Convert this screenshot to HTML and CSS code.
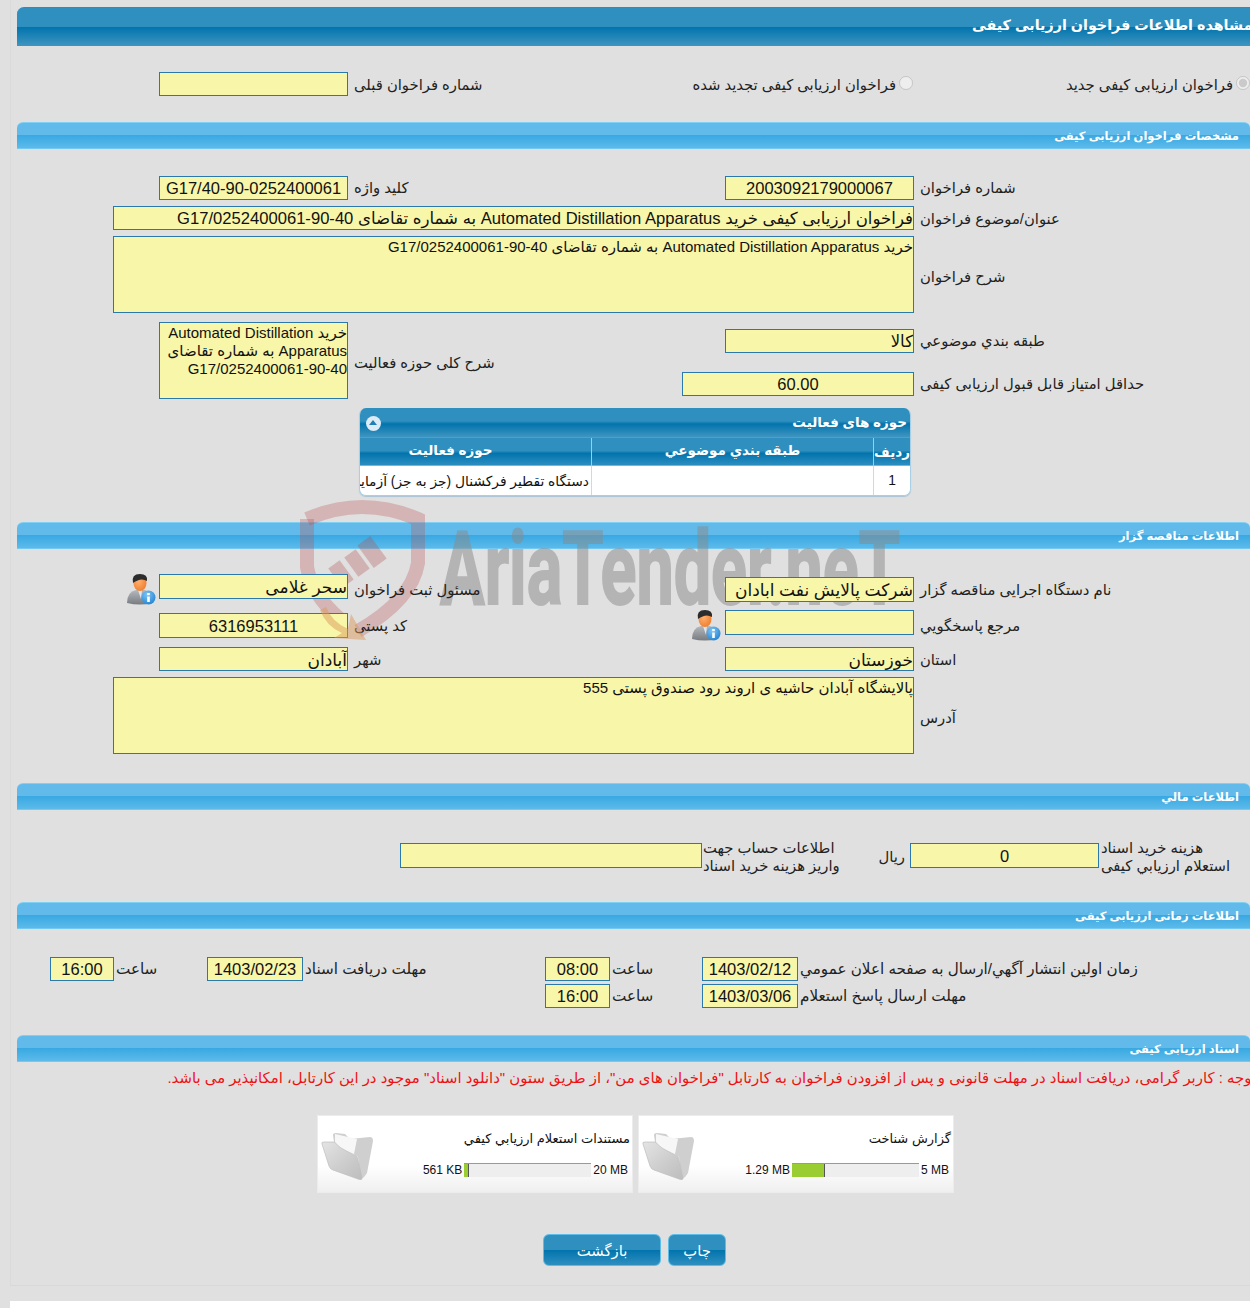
FILE: index.html
```html
<!DOCTYPE html>
<html lang="fa">
<head>
<meta charset="utf-8">
<title>مشاهده اطلاعات فراخوان ارزیابی کیفی</title>
<link rel="stylesheet" href="styles.css">
</head>
<body>
<div class="page">
  <svg class="watermark" viewBox="0 0 620 160" width="620" height="160" aria-hidden="true">
    <path class="wm-shield" d="M7 24 Q35 12 62 12 Q90 12 118 24 L118 68 Q112 105 58 136"/>
    <path class="wm-shield" d="M7 24 L7 72 Q12 100 40 124"/>
    <g class="wm-gavel">
      <rect x="-8" y="-14" width="16" height="28" transform="translate(72 57) rotate(-36)"/>
      <rect x="-7" y="-12" width="14" height="24" transform="translate(57 68) rotate(-36)"/>
      <rect x="-7" y="-12" width="14" height="24" transform="translate(41 79) rotate(-36)"/>
    </g>
    <text class="wm-text" x="140" y="109" textLength="460" lengthAdjust="spacingAndGlyphs">AriaTender.neT</text>
  </svg>
  <svg class="wm-arrow" viewBox="0 0 60 60" width="60" height="60" aria-hidden="true">
    <path d="M8 5 Q14 20 30 27 L33 12 L48 38 L16 36 L24 31 Q8 24 2 8Z"/>
  </svg>

  <h1 class="title-bar"><span>مشاهده اطلاعات فراخوان ارزیابی کیفی</span></h1>

  <div class="radio-row">
    <div></div>
    <input class="field" type="text" readonly>
    <label class="lbl">شماره فراخوان قبلی</label>
    <label class="radio"><input type="radio" name="kind" disabled><span>فراخوان ارزیابی کیفی تجدید شده</span></label>
    <label class="radio"><input type="radio" name="kind" checked disabled><span>فراخوان ارزیابی کیفی جدید</span></label>
  </div>

  <h2 class="sec-bar sec-a">مشخصات فراخوان ارزیابی کیفی</h2>

  <div class="row row-first">
    <div></div>
    <input class="field num" type="text" readonly value="G17/40-90-0252400061">
    <label class="lbl">کلید واژه</label>
    <input class="field num" type="text" readonly value="2003092179000067">
    <label class="lbl">شماره فراخوان</label>
  </div>
  <div class="wide wide-subject">
    <input class="field field-wide" type="text" readonly value="فراخوان ارزیابی کیفی خرید Automated Distillation Apparatus به شماره تقاضای G17/0252400061-90-40">
    <label class="lbl">عنوان/موضوع فراخوان</label>
  </div>
  <div class="wide wide-desc">
    <textarea class="field area-wide" readonly>خرید Automated Distillation Apparatus به شماره تقاضای G17/0252400061-90-40</textarea>
    <label class="lbl">شرح فراخوان</label>
  </div>

  <div class="activity">
    <div></div>
    <textarea class="field area-small" readonly>خرید Automated Distillation Apparatus به شماره تقاضای G17/0252400061-90-40</textarea>
    <label class="lbl lbl-mid">شرح کلی حوزه فعالیت</label>
    <div class="activity-right">
      <div class="pair pair-cat">
        <input class="field field-cat" type="text" readonly value="کالا">
        <label class="lbl">طبقه بندي موضوعي</label>
      </div>
      <div class="pair pair-score">
        <input class="field field-score num" type="text" readonly value="60.00">
        <label class="lbl">حداقل امتیاز قابل قبول ارزیابی کیفی</label>
      </div>
    </div>
  </div>

  <div class="subtable">
    <div class="sub-title"><span>حوزه های فعالیت</span><span class="collapse"></span></div>
    <div class="sub-head">
      <div class="c-a">حوزه فعالیت</div>
      <div class="c-b">طبقه بندي موضوعي</div>
      <div class="c-c">ردیف</div>
    </div>
    <div class="sub-body">
      <div class="c-a clip">دستگاه تقطیر فرکشنال (جز به جز) آزمایشگاهی</div>
      <div class="c-b"></div>
      <div class="c-c">1</div>
    </div>
  </div>

  <h2 class="sec-bar sec-b">اطلاعات مناقصه گزار</h2>

  <div class="row row-org">
    <div class="icon-cell">
      <svg class="user-icon" viewBox="0 0 30 32" width="30" height="32" aria-hidden="true"><use href="#user"/></svg>
    </div>
    <input class="field field-big" type="text" readonly value="سحر غلامی">
    <label class="lbl">مسئول ثبت فراخوان</label>
    <input class="field field-big shift3" type="text" readonly value="شرکت پالایش نفت ابادان">
    <label class="lbl">نام دستگاه اجرایی مناقصه گزار</label>
  </div>
  <div class="row row-post">
    <div></div>
    <input class="field num shift3" type="text" readonly value="6316953111">
    <label class="lbl">کد پستی</label>
    <div class="ref-cell">
      <svg class="user-icon" viewBox="0 0 30 32" width="30" height="32" aria-hidden="true"><use href="#user"/></svg>
      <input class="field ref-field" type="text" readonly>
    </div>
    <label class="lbl">مرجع پاسخگویي</label>
  </div>
  <div class="row row-city">
    <div></div>
    <input class="field field-big" type="text" readonly value="آبادان">
    <label class="lbl">شهر</label>
    <input class="field field-big" type="text" readonly value="خوزستان">
    <label class="lbl">استان</label>
  </div>
  <div class="wide wide-addr">
    <textarea class="field area-wide" readonly>پالایشگاه آبادان حاشیه ی اروند رود صندوق پستی 555</textarea>
    <label class="lbl">آدرس</label>
  </div>

  <h2 class="sec-bar sec-c">اطلاعات مالي</h2>

  <div class="finance">
    <input class="field field-acc" type="text" readonly>
    <label class="lbl-2line lbl-acc">اطلاعات حساب جهت<br>واریز هزینه خرید اسناد</label>
    <span class="rial">ریال</span>
    <input class="field num" type="text" readonly value="0">
    <label class="lbl-2line lbl-fee">هزینه خرید اسناد<br>استعلام ارزیابي کیفی</label>
  </div>

  <h2 class="sec-bar sec-d">اطلاعات زمانی ارزیابی کیفی</h2>

  <div class="times times-first">
    <div></div>
    <input class="field num" type="text" readonly value="16:00">
    <label class="lbl-t">ساعت</label>
    <input class="field num" type="text" readonly value="1403/02/23">
    <label class="lbl-t">مهلت دریافت اسناد</label>
    <input class="field num" type="text" readonly value="08:00">
    <label class="lbl-t">ساعت</label>
    <input class="field num" type="text" readonly value="1403/02/12">
    <label class="lbl-t">زمان اولین انتشار آگهي/ارسال به صفحه اعلان عمومي</label>
  </div>
  <div class="times times-second">
    <div></div><div></div><div></div><div></div><div></div>
    <input class="field num" type="text" readonly value="16:00">
    <label class="lbl-t">ساعت</label>
    <input class="field num" type="text" readonly value="1403/03/06">
    <label class="lbl-t">مهلت ارسال پاسخ استعلام</label>
  </div>

  <h2 class="sec-bar sec-e">اسناد ارزیابی کیفی</h2>

  <p class="notice"><span>توجه : کاربر گرامی، دریافت اسناد در مهلت قانونی و پس از افزودن فراخوان به کارتابل "فراخوان های من"، از طریق ستون "دانلود اسناد" موجود در این کارتابل، امکانپذیر می باشد.</span></p>

  <div class="cards">
    <div class="card">
      <svg class="folder" viewBox="0 0 54 48" width="54" height="48" aria-hidden="true"><use href="#folder"/></svg>
      <div class="card-main">
        <div class="card-title">مستندات استعلام ارزیابي کیفي</div>
        <div class="meter">
          <span class="m-used">561 KB</span>
          <div class="m-bar"><div class="m-fill" style="width:4%"></div></div>
          <span class="m-max">20 MB</span>
        </div>
      </div>
    </div>
    <div class="card">
      <svg class="folder" viewBox="0 0 54 48" width="54" height="48" aria-hidden="true"><use href="#folder"/></svg>
      <div class="card-main">
        <div class="card-title">گزارش شناخت</div>
        <div class="meter">
          <span class="m-used">1.29 MB</span>
          <div class="m-bar"><div class="m-fill" style="width:26%"></div></div>
          <span class="m-max">5 MB</span>
        </div>
      </div>
    </div>
  </div>

  <div class="actions">
    <button class="btn btn-back" type="button">بازگشت</button>
    <button class="btn btn-print" type="button">چاپ</button>
  </div>
</div>
<div class="footer"></div>

<svg class="defs" width="0" height="0" aria-hidden="true">
  <defs>
    <linearGradient id="suit" x1="0" y1="0" x2="0" y2="1"><stop offset="0" stop-color="#b5b9bd"/><stop offset="1" stop-color="#777c80"/></linearGradient>
    <radialGradient id="face" cx=".4" cy=".4" r=".7"><stop offset="0" stop-color="#ffb070"/><stop offset="1" stop-color="#ee7a28"/></radialGradient>
    <radialGradient id="info" cx=".4" cy=".3" r=".8"><stop offset="0" stop-color="#7fc4f5"/><stop offset="1" stop-color="#1c7fd0"/></radialGradient>
    <linearGradient id="fold" x1="0" y1="0" x2="1" y2="1"><stop offset="0" stop-color="#e4e4e4"/><stop offset=".55" stop-color="#cdcdcd"/><stop offset="1" stop-color="#bdbdbd"/></linearGradient>
    <symbol id="user" viewBox="0 0 30 32">
      <path d="M1 30 Q1 19 10 17 L19 17 Q25 19 26 30 Q14 33 1 30Z" fill="url(#suit)"/>
      <path d="M12 17 L16 17 L15 26Z" fill="#dfe6ec"/>
      <ellipse cx="14" cy="10" rx="6.5" ry="8" fill="url(#face)"/>
      <path d="M7 10 Q5 1 14 1 Q22 1 21 8 Q15 4 7 10Z" fill="#2c2c2c"/>
      <circle cx="22.5" cy="24.5" r="7" fill="url(#info)"/>
      <rect x="21.2" y="23.5" width="2.6" height="5.5" fill="#fff"/>
      <rect x="21.2" y="20" width="2.6" height="2.2" fill="#fff"/>
    </symbol>
    <symbol id="folder" viewBox="0 0 54 48">
      <path d="M12 3 Q12 1 15 1 L24 2 L29 7 L49 5 Q52 5 52 9 L46 41 Q44 45 40 47 L37 25 L13 10Z" fill="#cfcfcf"/>
      <path d="M14 2 L36 7 L33 22 L20 16 L14 10Z" fill="#f7f7f7"/>
      <path d="M1 12 Q0 10 3 10 L13 10 L20 16 L35 24 Q37 25 37 28 L41 46 Q41 49 37 47 L12 38 Q9 37 8 34Z" fill="url(#fold)" stroke="#bdbdbd" stroke-width=".7"/>
    </symbol>
  </defs>
</svg>
</body>
</html>
```
FILE: styles.css
```css
* { box-sizing: border-box; }
html, body { margin: 0; padding: 0; }
body {
  background: #e0e0e0;
  font-family: "Liberation Sans", "DejaVu Sans", sans-serif;
  font-size: 14.8px;
  color: #111;
  overflow-x: hidden;
}
.page {
  position: relative;
  margin-left: 10px;
  width: 1240px;
  height: 1286px;
  padding: 7px 0 0 6px;
  border-left: 1px solid #dadada;
  border-bottom: 1px solid #d8d8d8;
  overflow: hidden;
}
.footer { margin: 15px 0 0 10px; height: 7px; background: #fff; }
.defs { position: absolute; }

.watermark { position: absolute; left: 289px; top: 495px; z-index: 1; pointer-events: none; }
.wm-shield { fill: none; stroke: #b94f4f; stroke-opacity: .3; stroke-width: 14; }
.wm-gavel rect { fill: #b05050; fill-opacity: .32; }
.wm-text {
  font-family: Roboto, sans-serif;
  font-weight: 700;
  font-size: 102px;
  fill: #8a8a8a;
  stroke: #8a8a8a;
  stroke-width: 2;
  opacity: .5;
}
.wm-arrow { position: absolute; left: 307px; top: 602px; z-index: 3; pointer-events: none; }
.wm-arrow path { fill: #d99a5a; fill-opacity: .5; }

.title-bar {
  margin: 0;
  height: 39px;
  width: 1233px;
  padding: 0 0 4px 955px;
  display: flex;
  align-items: center;
  white-space: nowrap;
  direction: rtl;
  justify-content: flex-end;
  color: #fff;
  font-size: 14.3px;
  font-weight: bold;
  border-top: 1px solid #2a8cc6;
  border-top-left-radius: 7px;
  background: linear-gradient(#2f8fbf 0, #2f8fbf 49%, #0274ad 51%, #3f95c0 100%);
}
.sec-bar {
  position: relative;
  margin: 0;
  height: 27px;
  width: 1233px;
  padding: 0 11px 0 0;
  direction: rtl;
  display: flex;
  align-items: center;
  color: #fff;
  font-size: 11.5px;
  font-weight: bold;
  border-top: 1px solid #80d0f4;
  border-bottom: 1px solid #74c9f2;
  border-top-left-radius: 6px;
  border-top-right-radius: 6px;
  background: linear-gradient(#62baea 0, #62baea 48%, #3aa9e2 50%, #5cbaea 100%);
}
.sec-a { margin-top: 26px; }
.sec-b { margin-top: 26px; }
.sec-c { margin-top: 29px; }
.sec-d { margin-top: 34px; }
.sec-e { margin-top: 27px; }

.field {
  position: relative;
  z-index: 2;
  display: block;
  width: 100%;
  height: 24px;
  margin: 0;
  padding: 1px 0 0;
  border: 1px solid #2b78ac;
  border-radius: 0;
  background: #f8f6a9;
  color: #111;
  font-family: inherit;
  font-size: 16.5px;
  direction: rtl;
  text-align: right;
  outline: none;
}
.num { text-align: center; direction: ltr; }
.field-big { font-size: 17px; padding-top: 2px; }
textarea.field { resize: none; overflow: hidden; line-height: 18px; font-size: 15px; }
.lbl, .lbl-t, .rial, .lbl-2line, .radio span {
  position: relative;
  z-index: 2;
  direction: rtl;
  color: #222;
  white-space: nowrap;
}
.lbl { padding-left: 6px; display: flex; align-items: center; justify-content: flex-end; width: max-content; }
.lbl-mid { top: 2px; align-self: center; }

.radio-row {
  display: grid;
  grid-template-columns: 142px 189px 191px 374px 337px;
  margin-top: 26px;
  height: 24px;
  width: 1233px;
}
.radio-row .field { height: 24px; }
.radio {
  direction: rtl;
  display: flex;
  align-items: center;
  gap: 3px;
}
.radio input { margin: -3px 0 0 0; width: 14px; height: 14px; flex: none; }

.row {
  display: grid;
  grid-template-columns: 142px 189px 377px 189px 336px;
  width: 1233px;
}
.row-first { margin-top: 27px; height: 24px; }
.row-first .lbl { top: -1px; }
.row-org { margin-top: 25px; height: 25px; }
.row-org .field { height: 25px; }
.row-post { margin-top: 11px; height: 25px; }
.row-post .field { height: 25px; }
.row-post .lbl { top: 3px; }
.row-city { margin-top: 12px; height: 24px; }
.shift3 { top: 3px; }
.icon-cell { display: flex; justify-content: flex-end; align-items: flex-start; padding-right: 3px; }
.user-icon { display: block; flex: none; position: relative; z-index: 2; margin-top: -1px; }
.ref-cell { position: relative; z-index: 2; width: 189px; display: block; }
.ref-field { width: 189px; }
.ref-cell .user-icon { position: absolute; left: -34px; top: 0; }

.wide { display: flex; margin-left: 96px; width: 1137px; }
.wide .field { width: 801px; flex: none; }
.wide-subject { margin-top: 6px; height: 24px; }
.wide-subject .field { height: 24px; padding-top: 2px; font-size: 16.6px; }
.wide-desc { margin-top: 6px; height: 77px; }
.wide-addr { margin-top: 6px; height: 77px; }
.wide-desc .lbl, .wide-addr .lbl { top: 2px; }
.area-wide { height: 77px; }

.activity {
  display: grid;
  grid-template-columns: 142px 189px 377px 525px;
  margin-top: 9px;
  height: 77px;
  width: 1233px;
}
.activity .lbl { height: 24px; }
.area-small { height: 77px; }
.activity-right { position: relative; margin-left: -43px; width: 568px; }
.pair { display: flex; }
.pair .lbl { top: -1px; }
.pair-cat { margin-top: 7px; margin-left: 43px; height: 23px; }
.pair-cat .field { width: 189px; height: 24px; flex: none; }
.pair-score { margin-top: 20px; height: 24px; }
.pair-score .field { width: 232px; flex: none; }

.subtable {
  position: relative;
  margin: 9px 0 0 342px;
  width: 552px;
  height: 88px;
  border-radius: 7px;
  border: 1px solid #a9cfe4;
  border-top: 0;
  overflow: hidden;
  box-shadow: 0 1px 1px #a9c4d6;
}
.sub-title {
  height: 29px;
  direction: rtl;
  display: flex;
  align-items: center;
  justify-content: space-between;
  padding: 0 3px 1px 6px;
  color: #fff;
  font-size: 13.5px;
  font-weight: bold;
  background: linear-gradient(#2f8fbf 0, #2f8fbf 45%, #0274ad 55%, #3f95c0 100%);
}
.collapse {
  position: relative;
  top: 1px;
  width: 15px;
  height: 15px;
  border-radius: 50%;
  background: #dcebf6;
}
.collapse::after {
  content: "";
  position: absolute;
  left: 3px;
  top: 4px;
  border: 4.5px solid transparent;
  border-top: 0;
  border-bottom: 5px solid #1f80b5;
}
.sub-head, .sub-body { display: grid; grid-template-columns: 231px 1fr 37px; }
.sub-head {
  height: 29px;
  color: #fff;
  font-weight: bold;
  font-size: 13.5px;
  background: linear-gradient(#2f8fbf 0, #2f8fbf 45%, #0274ad 55%, #2a8dc0 95%, #8ad4f5 100%);
  border-top: 1px solid #4da0cc;
}
.sub-head > div { display: flex; align-items: center; justify-content: center; direction: rtl; border-left: 1px solid #8ad4f5; padding-bottom: 5px; }
.sub-head > div:first-child { border-left: 0; padding-right: 50px; }
.sub-head .c-c { padding-bottom: 1px; }
.sub-body { height: 29px; background: #fff; font-size: 13.8px; }
.sub-body > div { display: flex; align-items: center; direction: rtl; border-left: 1px solid #c5dcea; }
.sub-body > div:first-child { border-left: 0; }
.sub-body .c-c { justify-content: center; }
.clip { white-space: nowrap; overflow: hidden; padding-right: 2px; }

.finance { display: flex; margin: 33px 0 0 383px; height: 25px; width: 850px; }
.finance .field { height: 25px; flex: none; width: 189px; padding-top: 2px; }
.finance .field-acc { width: 302px; }
.lbl-2line { line-height: 18px; display: block; margin-top: -4px; text-align: left; }
.lbl-acc { width: 179px; padding-left: 1px; }
.lbl-fee { margin-left: 2px; width: max-content; }
.rial { width: 29px; padding: 5px 5px 0 0; }

.times {
  display: grid;
  grid-template-columns: 33px 64px 93px 96px 242px 65px 92px 96px 452px;
  height: 24px;
  width: 1233px;
}
.times-first { margin-top: 28px; }
.times-second { margin-top: 3px; }
.lbl-t { font-size: 15.2px; padding-left: 2px; display: flex; align-items: center; justify-content: flex-end; width: max-content; }

.notice {
  margin: 7px 0 0 0;
  height: 18px;
  width: 1233px;
  display: flex;
  direction: rtl;
  justify-content: flex-start;
  white-space: nowrap;
  color: #f01010;
  font-size: 14.9px;
  line-height: 18px;
}
.notice span { margin-right: -6px; }

.cards { display: flex; gap: 5px; margin: 28px 0 0 300px; height: 78px; }
.card {
  display: flex;
  width: 316px;
  height: 78px;
  padding: 16px 2px 0 3px;
  border: 1px solid #ececec;
  background: linear-gradient(#fff 0, #fff 65%, #efefef 100%);
}
.folder { flex: none; }
.card-main { flex: 1; margin-top: -1px; display: flex; flex-direction: column; }
.card-title { direction: rtl; font-size: 13px; line-height: 16px; height: 16px; }
.meter { display: flex; justify-content: flex-end; align-items: center; margin: 16px 2px 0 0; height: 14px; font-size: 12px; }
.m-used { margin-right: 2px; }
.m-max { margin-left: 2px; min-width: 28px; }
.m-bar { width: 127px; height: 14px; background: #eee; border-top: 1px solid #999; }
.m-fill { height: 100%; background: #9acd32; border-right: 1px solid #555; }

.actions { display: flex; gap: 7px; margin: 41px 0 0 526px; height: 32px; }
.btn {
  height: 32px;
  padding: 0;
  border: 1px solid #5ebde8;
  border-radius: 6px;
  color: #fff;
  font-family: inherit;
  font-size: 14.8px;
  direction: rtl;
  background: linear-gradient(#2f8fbf 0, #2f8fbf 49%, #0274ad 51%, #2f8fbf 100%);
}
.btn-back { width: 118px; }
.btn-print { width: 58px; }
```
